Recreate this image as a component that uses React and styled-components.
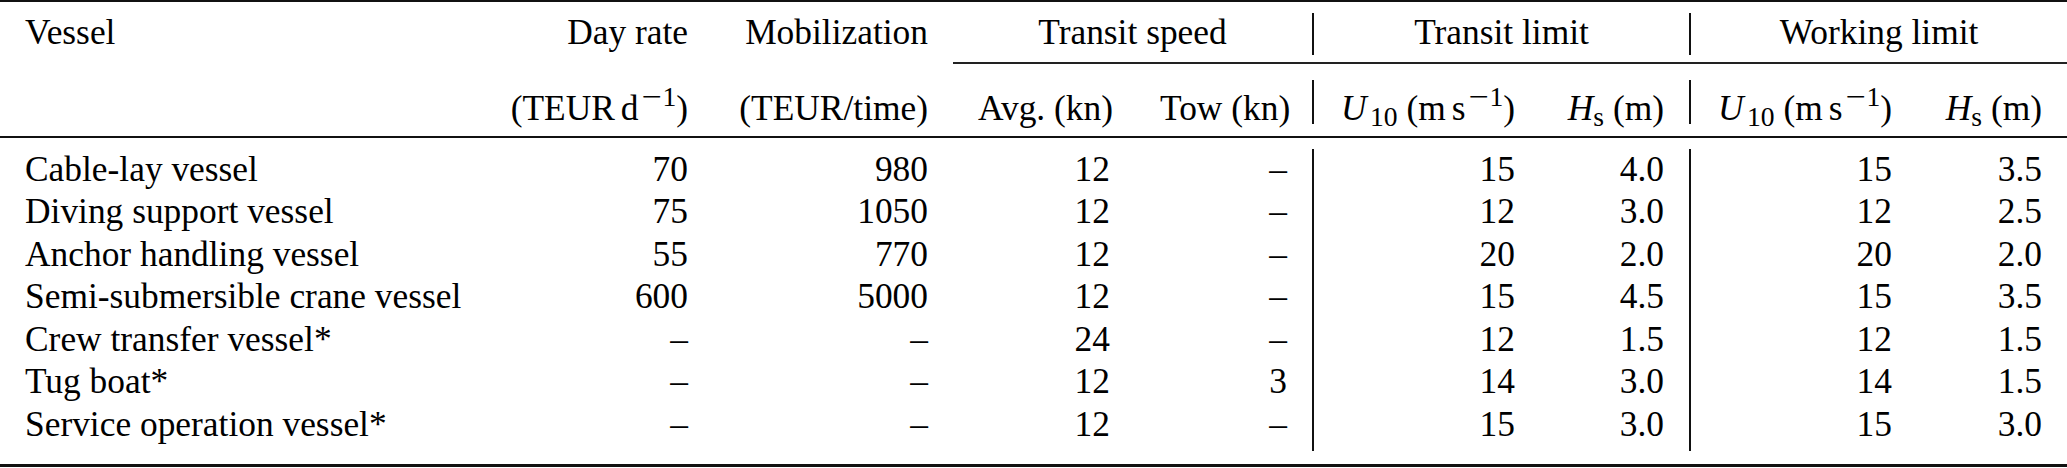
import styled, { createGlobalStyle } from "styled-components";

const GlobalStyle = createGlobalStyle`
    body {
        margin: 0;
        background: #fff;
        font-family: 'Liberation Serif', serif;
    }
`;

// column tracks: vessel, day rate, mobilization, avg, tow, |, U10, Hs, |, U10, Hs
const COLUMNS = "483px 230px 240px 182px 177px 2px 226px 149px 2px 226px 150px";

const StyledTable = styled.div`
    width: 2067px;
    font-family: 'Liberation Serif', serif;
    font-size: 35.4px;
    line-height: 42.5px;
    color: #000;
`;

const Rule = styled.div`
    height: ${(p) => p.$h}px;
    background: #111;
`;

const Row = styled.div`
    display: grid;
    grid-template-columns: ${COLUMNS};
    grid-template-rows: ${(p) => p.$rows};
    padding: ${(p) => p.$pad || 0};
`;

const Cell = styled.div`
    padding: ${(p) => p.$top || 0}px 25px 0;
    text-align: ${(p) => p.$align || "right"};
    white-space: nowrap;
    grid-column: ${(p) => p.$span || "auto"};
`;

const Bar = styled.div`
    grid-column: ${(p) => p.$col};
    grid-row: 1 / -1;
    background: #111;
    margin: ${(p) => p.$top}px 0 ${(p) => p.$bottom}px;
`;

const CmidRule = styled.div`
    grid-column: 4 / -1;
    height: 1.6px;
    background: #222;
`;

const Var = styled.span`
    font-style: italic;
`;

const Sub = styled.span`
    font-size: 0.78em;
    vertical-align: -0.22em;
    line-height: 0;
    margin-left: ${(p) => p.$gap || 0}em;
`;

const Sup = styled.span`
    font-size: 0.78em;
    vertical-align: 0.5em;
    line-height: 0;
    padding-left: 0.12em;

    .minus {
        display: inline-block;
        transform: scaleX(1.3);
        margin: 0 0.1em 0 0.08em;
    }
`;

const Thin = styled.span`
    display: inline-block;
    width: 0.17em;
`;

const rows = [
    ["Cable-lay vessel", "70", "980", "12", "–", "15", "4.0", "15", "3.5"],
    ["Diving support vessel", "75", "1050", "12", "–", "12", "3.0", "12", "2.5"],
    ["Anchor handling vessel", "55", "770", "12", "–", "20", "2.0", "20", "2.0"],
    ["Semi-submersible crane vessel", "600", "5000", "12", "–", "15", "4.5", "15", "3.5"],
    ["Crew transfer vessel*", "–", "–", "24", "–", "12", "1.5", "12", "1.5"],
    ["Tug boat*", "–", "–", "12", "3", "14", "3.0", "14", "1.5"],
    ["Service operation vessel*", "–", "–", "12", "–", "15", "3.0", "15", "3.0"],
];

function Inverse() {
    return (
        <Sup>
            <span className="minus">−</span>1
        </Sup>
    );
}

function WindUnit() {
    return (
        <>
            <Var>U</Var>
            <Sub $gap={0.12}>10</Sub> (m<Thin />s<Inverse />)
        </>
    );
}

function WaveUnit() {
    return (
        <>
            <Var>H</Var>
            <Sub>s</Sub> (m)
        </>
    );
}

function App() {
    return (
        <StyledTable>
            <GlobalStyle />
            <Rule $h={2} />

            <Row $rows="60px">
                <Cell $align="left" $top={9}>Vessel</Cell>
                <Cell $top={9}>Day rate</Cell>
                <Cell $top={9}>Mobilization</Cell>
                <Cell $span="4 / 6" $align="center" $top={9}>Transit speed</Cell>
                <Bar $col={6} $top={11} $bottom={7} />
                <Cell $span="7 / 9" $align="center" $top={9}>Transit limit</Cell>
                <Bar $col={9} $top={11} $bottom={7} />
                <Cell $span="10 / 12" $align="center" $top={9}>Working limit</Cell>
            </Row>

            <Row $rows="1.6px">
                <CmidRule />
            </Row>

            <Row $rows="72.4px">
                <Cell />
                <Cell $top={23}>
                    (TEUR<Thin />d<Inverse />)
                </Cell>
                <Cell $top={23}>(TEUR/time)</Cell>
                <Cell $top={23}>Avg. (kn)</Cell>
                <Cell $top={23}>Tow (kn)</Cell>
                <Bar $col={6} $top={16} $bottom={12} />
                <Cell $top={23}><WindUnit /></Cell>
                <Cell $top={23}><WaveUnit /></Cell>
                <Bar $col={9} $top={16} $bottom={12} />
                <Cell $top={23}><WindUnit /></Cell>
                <Cell $top={23}><WaveUnit /></Cell>
            </Row>

            <Rule $h={2} />

            <Row $rows="repeat(7, 42.5px)" $pad="10px 0 18.5px">
                <Bar $col={6} $top={1} $bottom={-6} />
                <Bar $col={9} $top={1} $bottom={-6} />
                {rows.map((row) =>
                    row.map((value, i) => (
                        <Cell key={row[0] + i} $align={i === 0 ? "left" : "right"}>
                            {value}
                        </Cell>
                    ))
                )}
            </Row>

            <Rule $h={3} />
        </StyledTable>
    );
}

export default App;
